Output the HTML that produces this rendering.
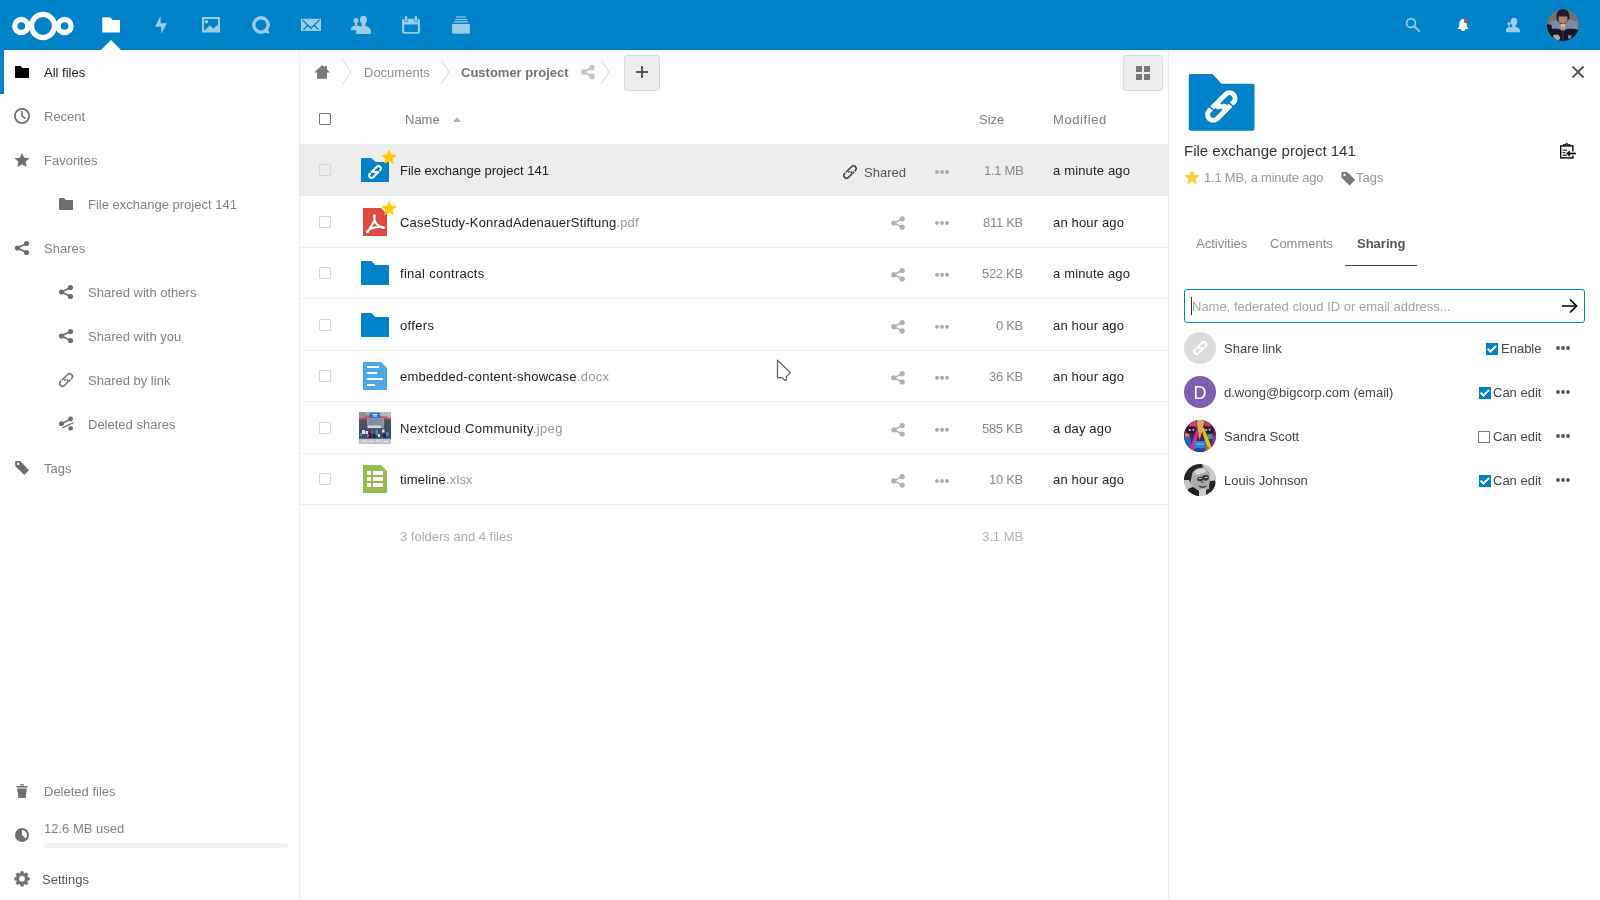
<!DOCTYPE html>
<html><head><meta charset="utf-8">
<style>
*{box-sizing:border-box;margin:0;padding:0}
html,body{width:1600px;height:900px;overflow:hidden;background:#fff;font-family:"Liberation Sans",sans-serif;font-size:13px;color:#222}
.a{position:absolute}
.t{position:absolute;white-space:nowrap;font-size:13px;line-height:16px;will-change:transform}
svg{position:absolute;overflow:visible}
#hdr{position:absolute;left:0;top:0;width:1600px;height:50px;background:#0082c9}
#nav{position:absolute;left:0;top:50px;width:300px;height:850px;background:#fff;border-right:1px solid #eee}
.nv{color:#828282}
.ext{color:#999}
.sz{color:#8a8a8a;letter-spacing:-0.3px}
.line{position:absolute;left:300px;width:868px;height:1px;background:#ededed}
.cb{position:absolute;left:319px;width:12px;height:12px;border:1px solid #d6d6d6;border-radius:1px;background:transparent}
</style></head><body>
<div id="hdr"></div>
<svg width="1600" height="50" style="left:0;top:0">
<g fill="none" stroke="#fff">
<circle cx="43" cy="26" r="11.55" stroke-width="5.3"/>
<circle cx="21.3" cy="26" r="6.5" stroke-width="5.4"/>
<circle cx="64.6" cy="26" r="6.5" stroke-width="5.4"/>
</g>
<path fill="#fff" d="M102.3 17.2h7.7l3 2.8h7v12.5h-17.7z"/>
<path fill="#fff" d="M101 50l10-10l10 10z"/>
<g fill="#99cde9">
<path d="M160.5 16L155 26.8h6.2l0.1 7L167 23.2h-6.3z"/>
<path d="M202 17h18v15.5h-18z M204 19v11.5h14v-11.5z"/>
<circle cx="206.5" cy="21.8" r="1.8"/>
<path d="M204 31l5.8-5.8l3.5 3.3l5.7-4.8v7.3z"/>
<path fill-rule="evenodd" d="M261 16.1a8.9 8.9 0 1 0 0 17.8a8.9 8.9 0 0 0 4.3-1.1l4.4 1l-1.6-4.3a8.9 8.9 0 0 0 1.8-4.6a8.9 8.9 0 0 0-8.9-8.8z M261 19.4a5.5 5.5 0 1 1 0 11a5.5 5.5 0 0 1 0-11z"/>
<path d="M301 18.8h20v12.2h-20z"/>
<ellipse cx="356" cy="20.6" rx="2.5" ry="2.7"/>
<path d="M354.8 22.5h2.4v3h-2.4z"/>
<path d="M351 29.3c0-2.3 2-3.8 5-3.8c1.6 0 2.9 0.4 3.8 1l0 3.8h-8.2c-0.4 0-0.6-0.4-0.6-1z"/>
<ellipse cx="363.5" cy="19.7" rx="3.5" ry="4"/>
<path d="M361.6 22.5h3.8v3.5h-3.8z"/>
<path d="M356 31.5c0-3.3 3.4-5.8 7.5-5.8s7.5 2.5 7.5 5.8v1.2c0 0.8-0.8 1.3-1.6 1.3h-11.8c-0.8 0-1.6-0.5-1.6-1.3z"/>
<path fill-rule="evenodd" d="M404 18.8h14a2 2 0 0 1 2 2v11a2 2 0 0 1-2 2h-14a2 2 0 0 1-2-2v-11a2 2 0 0 1 2-2z M404.2 24.5v7.6h13.6v-7.6z"/>
<rect x="404.9" y="16" width="2.4" height="5.6" rx="1.2" stroke="#0082c9" stroke-width="1.2" paint-order="stroke"/>
<rect x="414.7" y="16" width="2.4" height="5.6" rx="1.2" stroke="#0082c9" stroke-width="1.2" paint-order="stroke"/>
<rect x="452.1" y="23.9" width="17.8" height="9.9" rx="1"/>
<rect x="454" y="21.2" width="14" height="1.4" opacity="0.9"/>
<rect x="455" y="19" width="12" height="1.1" opacity="0.95"/>
<rect x="456" y="16.3" width="10" height="1.4" opacity="0.85"/>
<circle cx="1411" cy="23" r="4.4" fill="none" stroke="#99cde9" stroke-width="1.6"/>
<path d="M1414 26l5.2 5.2" stroke="#99cde9" stroke-width="1.8" stroke-linecap="round"/>
<ellipse cx="1514" cy="21.7" rx="3.3" ry="3.9"/>
<path d="M1512.3 24.5h3.4v3h-3.4z"/>
<circle cx="1509" cy="23.5" r="1.6"/>
<path d="M1508.4 24.5h1.2v3h-1.2z"/>
<path d="M1506 30.2c0-1.6 1-2.6 2.8-2.9l3.2-0.2c0.8-0.3 1.5-0.4 2-0.4c3.5 0 6 1.6 6 4.1v0.9c0 0.4-0.3 0.6-0.7 0.6h-12.6c-0.4 0-0.7-0.2-0.7-0.6z"/>
</g>
<path fill="none" d="M302.5 20l8.5 8.3l8.5-8.3" stroke="#0082c9" stroke-width="1.3"/>
<path d="M303.5 29.5l4.3-4 M318.5 29.5l-4.3-4" stroke="#0082c9" stroke-width="1.3"/>
<path fill="#fff" d="M1463.2 19c-2.8 0.3-3.8 2.6-3.9 5.2l-0.3 2.6l-1.2 1.4v0.8h10.5v-0.8l-1.2-1.4l-0.3-2.6c-0.1-2.6-0.9-4.9-3.6-5.2z M1460.9 28.9h4.4c0 1.3-0.9 2.1-2.2 2.1s-2.2-0.8-2.2-2.1z"/>
<circle cx="1466" cy="20.8" r="2.3" fill="#0082c9"/><circle cx="1466" cy="20.8" r="2" fill="#ee4a1e"/>
<defs><clipPath id="avc"><circle cx="1563" cy="25" r="16"/></clipPath></defs>
<g clip-path="url(#avc)">
<rect x="1547" y="9" width="32" height="32" fill="#76716f"/>
<path d="M1547 26l3-4l6-2l2 3l-1 6l-4 3l-6 1z" fill="#85807d"/>
<path d="M1556.5 17c0-5 2-8 6.5-8s6.5 3 6.5 8l-0.5 7l-2-1v-6h-8v6l-2 1z" fill="#1b1d30"/>
<path d="M1558.6 16.5h8.8v5c-0.8 2.5-2.5 3.3-4.4 3.3s-3.6-0.8-4.4-3.3z" fill="#a98676"/>
<path d="M1559.5 21c1 1.8 2 2.6 3.5 2.6s2.5-0.8 3.5-2.6v2.5l-3.5 1.3l-3.5-1.3z" fill="#6e3f33"/>
<path d="M1551 22c2-1.5 4-2 6-1.5l3.5 4l2.5 5l2.5-5l3-5c3.5 0 7 1 9 3v9h-27z" fill="#7d8aa8"/>
<path d="M1560.5 24h5l-1 6h-3z" fill="#cdb3a8"/>
<path d="M1547 30c3-1 8-1.5 12-1l4 2l4-2c4-0.5 9 0 12 1v11h-32z" fill="#151729"/>
<path d="M1547 24l4.5 1l1 16h-5.5z" fill="#10121e"/>
<path d="M1563 27v14" stroke="#454a60" stroke-width="0.7"/>
<path d="M1553 35l5-0.5l2.5 3l-2 3.5h-4z" fill="#bba294"/>
<path d="M1568 35l3.5 0.5l-0.5 3h-3z" fill="#8f7b72"/>
</g>
</svg>
<div id="nav"></div>
<div class="a" style="left:0;top:50px;width:4px;height:44px;background:#0082c9"></div>
<svg width="300" height="850" style="left:0;top:0">
<path fill="#000" d="M15 66h5.5l2 2h6.5v10h-14z"/>
<g fill="#6e6e6e">
<path fill-rule="evenodd" d="M22 108a8 8 0 1 1 0 16a8 8 0 0 1 0-16z M22 109.8a6.2 6.2 0 1 0 0 12.4a6.2 6.2 0 0 0 0-12.4z"/>
<path d="M21.2 111h1.6v4.6l3.2 2.4l-1 1.2l-3.8-3z"/>
<path d="M22 152.9l2.2 4.8l5.3 0.5l-4 3.5l1.2 5.3l-4.7-2.8l-4.7 2.8l1.2-5.3l-4-3.5l5.3-0.5z"/>
<path d="M59 198h5l2 2h7v10h-14z"/>
</g>
<g id="shr" fill="#6e6e6e">
<circle cx="26.5" cy="243.5" r="2.6"/><circle cx="26.5" cy="252.5" r="2.6"/><circle cx="17.5" cy="248" r="2.6"/>
<path d="M17.5 248L26.5 243.5M17.5 248L26.5 252.5" stroke="#6e6e6e" stroke-width="1.8"/>
</g>
<use href="#shr" x="44" y="44"/>
<use href="#shr" x="44" y="88"/>
<path d="M62.43 383.57L69.57 376.43" stroke="#6e6e6e" stroke-width="7.06" stroke-linecap="round"/><path d="M62.43 383.57L69.57 376.43" stroke="#fff" stroke-width="4.12" stroke-linecap="round"/><circle cx="64.82" cy="379.86" r="0.98" fill="#6e6e6e"/><circle cx="67.18" cy="380.14" r="0.98" fill="#6e6e6e"/><path d="M60.70 379.97L63.09 381.94M71.30 380.03L68.91 378.06" stroke="#fff" stroke-width="1.00"/>
<g fill="#6e6e6e">
<circle cx="70.6" cy="419" r="2.4"/><circle cx="70.6" cy="428.3" r="2.4"/><circle cx="61.5" cy="423.7" r="2.5"/><path d="M61.5 423.7L70.6 419" stroke="#6e6e6e" stroke-width="1.7"/><path d="M62.3 427.8L73.8 422.5" stroke="#fff" stroke-width="3.2"/><path d="M62.3 427.8L73.8 422.5" stroke="#6e6e6e" stroke-width="1.3"/>
<path d="M15.2 461H20.3L29 470.2L24.2 475L15.2 466Z"/>
<rect x="17" y="462.7" width="2.2" height="2.2" fill="#fff"/>
<path d="M16.5 786h11v1.6h-11z M20 784.3h4v1.2h-4z M17.3 788.6h9.4l-1 9.4h-7.4z"/>
<path fill-rule="evenodd" d="M22 828a7 7 0 1 1 0 14a7 7 0 0 1 0-14z M22 830v5l3.6 3.4a5 5 0 0 0-3.6-8.4z"/>
<path fill-rule="evenodd" stroke="#6e6e6e" stroke-width="0.6" stroke-linejoin="round" d="M27.20 877.01L29.41 877.63L29.41 879.97L27.20 880.59L26.94 881.21L28.07 883.21L26.41 884.87L24.41 883.74L23.79 884.00L23.17 886.21L20.83 886.21L20.21 884.00L19.59 883.74L17.59 884.87L15.93 883.21L17.06 881.21L16.80 880.59L14.59 879.97L14.59 877.63L16.80 877.01L17.06 876.39L15.93 874.39L17.59 872.73L19.59 873.86L20.21 873.60L20.83 871.39L23.17 871.39L23.79 873.60L24.41 873.86L26.41 872.73L28.07 874.39L26.94 876.39Z M25.20 878.80A3.2 3.2 0 1 0 18.80 878.80A3.2 3.2 0 1 0 25.20 878.80Z"/>
</g>
</svg>
<div class="t" style="left:44px;top:65px;color:#222">All files</div>
<div class="t nv" style="left:44px;top:109px">Recent</div>
<div class="t nv" style="left:44px;top:153px">Favorites</div>
<div class="t nv" style="left:88px;top:197px">File exchange project 141</div>
<div class="t nv" style="left:44px;top:241px">Shares</div>
<div class="t nv" style="left:88px;top:285px">Shared with others</div>
<div class="t nv" style="left:88px;top:329px">Shared with you</div>
<div class="t nv" style="left:88px;top:373px">Shared by link</div>
<div class="t nv" style="left:88px;top:417px">Deleted shares</div>
<div class="t nv" style="left:44px;top:461px">Tags</div>
<div class="t nv" style="left:44px;top:784px">Deleted files</div>
<div class="t nv" style="left:44px;top:821px">12.6 MB used</div>
<div class="a" style="left:44px;top:843px;width:244px;height:5px;border-radius:3px;background:#f2f2f2"></div>
<div class="t" style="left:42px;top:872px;color:#555">Settings</div>

<!-- main -->
<svg width="1600" height="900" style="left:0;top:0">
<path fill="#7a7a7a" d="M322.2 64.9L314.2 72.6H317.1V78.8H327V72.6H330L327 69.6V66H324.6V67.3z"/>
<g fill="none" stroke="#d4d4d4" stroke-width="1">
<path d="M343 60l8 12l-8 12"/><path d="M441 60l8 12l-8 12"/><path d="M601 60l8 12l-8 12"/>
</g>
<g fill="#c2c2c2">
<circle cx="592" cy="67.6" r="2.8"/><circle cx="592" cy="76.4" r="2.8"/><circle cx="583.8" cy="72" r="2.8"/>
<path d="M583.8 72L592 67.6M583.8 72L592 76.4" stroke="#c2c2c2" stroke-width="2"/>
</g>
</svg>
<div class="t" style="left:364px;top:65px;color:#8f8f8f">Documents</div>
<div class="t" style="left:461px;top:65px;color:#737373;font-weight:bold">Customer project</div>
<div class="a" style="left:624px;top:55px;width:36px;height:36px;background:#ededed;border:1px solid #dbdbdb;border-radius:3px"></div>
<div class="a" style="left:636px;top:71px;width:12px;height:2px;background:#555"></div>
<div class="a" style="left:641px;top:66px;width:2px;height:12px;background:#555"></div>
<div class="a" style="left:1123px;top:55px;width:40px;height:36px;background:#ededed;border:1px solid #dbdbdb;border-radius:3px"></div>
<div class="a" style="left:1136px;top:66px;width:6px;height:6px;background:#777"></div>
<div class="a" style="left:1144px;top:66px;width:6px;height:6px;background:#777"></div>
<div class="a" style="left:1136px;top:74px;width:6px;height:6px;background:#777"></div>
<div class="a" style="left:1144px;top:74px;width:6px;height:6px;background:#777"></div>
<div class="a" style="left:1168px;top:50px;width:1px;height:850px;background:#eee"></div>
<!-- thead -->
<div class="a" style="left:319px;top:113px;width:12px;height:12px;border:1px solid #777;border-radius:1px"></div>
<div class="t" style="left:405px;top:112px;color:#7d7d7d">Name</div>
<svg width="10" height="6" style="left:453px;top:117px"><path d="M0 5l4 -4.5l4 4.5z" fill="#aaa"/></svg>
<div class="t" style="left:979px;top:112px;color:#7d7d7d">Size</div>
<div class="t" style="left:1053px;top:112px;color:#7d7d7d;letter-spacing:0.6px">Modified</div>
<!-- row highlight -->
<div class="a" style="left:300px;top:144px;width:868px;height:52px;background:#ededed"></div>
<div class="line" style="top:247px"></div>
<div class="line" style="top:298px"></div>
<div class="line" style="top:350px"></div>
<div class="line" style="top:401px"></div>
<div class="line" style="top:453px"></div>
<div class="line" style="top:504px"></div>
<div class="cb" style="top:164px"></div>
<div class="cb" style="top:216px"></div>
<div class="cb" style="top:267px"></div>
<div class="cb" style="top:319px"></div>
<div class="cb" style="top:370px"></div>
<div class="cb" style="top:422px"></div>
<div class="cb" style="top:473px"></div>
<svg width="1600" height="900" style="left:0;top:0">
<defs>
<path id="fld" d="M0 0.6a0.6 0.6 0 0 1 0.6-0.6h9.8l4 4h13a0.6 0.6 0 0 1 0.6 0.6v18.8a0.6 0.6 0 0 1-0.6 0.6h-26.8a0.6 0.6 0 0 1-0.6-0.6z"/>
<path id="star" d="M8 0l2.3 4.9l5.5 0.6l-4.1 3.7l1.1 5.4l-4.8-2.8l-4.8 2.8l1.1-5.4l-4.1-3.7l5.5-0.6z"/>
<g id="shi" fill="#b0b0b0">
<circle cx="11.2" cy="2.8" r="2.6"/><circle cx="11.2" cy="11.2" r="2.6"/><circle cx="2.8" cy="7" r="2.6"/>
<path d="M2.8 7L11.2 2.8M2.8 7L11.2 11.2" stroke="#b0b0b0" stroke-width="1.5"/>
</g>
<g id="dots" fill="#aaa"><circle cx="2" cy="2" r="2"/><circle cx="7" cy="2" r="2"/><circle cx="12" cy="2" r="2"/></g>
</defs>
<use href="#fld" x="361" y="158" fill="#0082c9"/>
<path d="M371.54 175.46L378.46 168.54" stroke="#fff" stroke-width="6.84" stroke-linecap="round"/><path d="M371.54 175.46L378.46 168.54" stroke="#0082c9" stroke-width="2.66" stroke-linecap="round"/><circle cx="373.86" cy="171.87" r="1.33" fill="#fff"/><circle cx="376.14" cy="172.13" r="1.33" fill="#fff"/><path d="M369.86 171.97L372.18 173.88M380.14 172.03L377.82 170.12" stroke="#0082c9" stroke-width="1.00"/>
<use href="#star" x="381" y="149.5" fill="#fc0"/>
<path fill="#dc4a40" d="M363 208h18l6 6v22h-24z"/>
<path fill="none" stroke="#fff" stroke-width="2.1" stroke-linecap="round" stroke-linejoin="round" d="M374.3 215.6C373.9 218 374.4 220.5 375.5 222.6C376.9 225.2 379.6 226.9 383.4 227.5C379.8 226.6 374.5 227.1 370.6 228.7C369.2 229.7 367.9 231 367.3 231.8C368.6 229.9 371.7 226.1 373.6 222.5C374.6 220.4 374.8 217.6 374.3 215.6z"/><circle cx="374.3" cy="215.8" r="1.4" fill="#fff"/><circle cx="383.3" cy="227.4" r="1.5" fill="#fff"/><circle cx="367.4" cy="231.6" r="1.6" fill="#fff"/>
<use href="#star" x="381" y="200.8" fill="#fc0"/>
<use href="#fld" x="361" y="261" fill="#0082c9"/>
<use href="#fld" x="361" y="313" fill="#0082c9"/>
<path fill="#4ba9e6" d="M363 362h18l6 6v22h-24z"/>
<g fill="#fff"><rect x="367" y="366" width="12" height="2"/><rect x="367" y="372" width="10" height="2"/><rect x="367" y="378" width="16" height="2"/><rect x="367" y="384" width="8" height="2"/></g>
<path fill="#96bc4f" d="M363 465h18l6 6v22h-24z"/>
<g fill="#fff"><rect x="367" y="471" width="4" height="4"/><rect x="373" y="471" width="10" height="4"/><rect x="367" y="477" width="4" height="4"/><rect x="373" y="477" width="10" height="4"/><rect x="367" y="483" width="4" height="4"/><rect x="373" y="483" width="10" height="4"/></g>
<path d="M846.54 175.46L853.46 168.54" stroke="#444" stroke-width="6.84" stroke-linecap="round"/><path d="M846.54 175.46L853.46 168.54" stroke="#ededed" stroke-width="3.80" stroke-linecap="round"/><circle cx="848.86" cy="171.87" r="0.95" fill="#444"/><circle cx="851.14" cy="172.13" r="0.95" fill="#444"/><path d="M844.86 171.97L847.18 173.88M855.14 172.03L852.82 170.12" stroke="#ededed" stroke-width="1.00"/>
<use href="#dots" x="935" y="170"/>
<use href="#shi" x="891" y="216"/><use href="#dots" x="935" y="221"/>
<use href="#shi" x="891" y="267.7"/><use href="#dots" x="935" y="272.7"/>
<use href="#shi" x="891" y="319.7"/><use href="#dots" x="935" y="324.7"/>
<use href="#shi" x="891" y="370.8"/><use href="#dots" x="935" y="375.8"/>
<use href="#shi" x="891" y="422.8"/><use href="#dots" x="935" y="427.8"/>
<use href="#shi" x="891" y="473.9"/><use href="#dots" x="935" y="478.9"/>
</svg>
<div class="t" style="left:400px;top:163px">File exchange project 141</div>
<div class="t" style="left:400px;top:215px;letter-spacing:0.19px">CaseStudy-KonradAdenauerStiftung<span class="ext">.pdf</span></div>
<div class="t" style="left:400px;top:266px;letter-spacing:0.29px">final contracts</div>
<div class="t" style="left:400px;top:318px;letter-spacing:0.35px">offers</div>
<div class="t" style="left:400px;top:369px;letter-spacing:0.25px">embedded-content-showcase<span class="ext">.docx</span></div>
<div class="t" style="left:400px;top:421px;letter-spacing:0.35px">Nextcloud Community<span class="ext">.jpeg</span></div>
<div class="t" style="left:400px;top:472px;letter-spacing:0.15px">timeline<span class="ext">.xlsx</span></div>
<div class="t" style="left:864px;top:165px;color:#555">Shared</div>
<div class="t sz" style="right:577px;top:163px">1.1 MB</div>
<div class="t sz" style="right:577px;top:215px">811 KB</div>
<div class="t sz" style="right:577px;top:266px">522 KB</div>
<div class="t sz" style="right:577px;top:318px">0 KB</div>
<div class="t sz" style="right:577px;top:369px">36 KB</div>
<div class="t sz" style="right:577px;top:421px">585 KB</div>
<div class="t sz" style="right:577px;top:472px">10 KB</div>
<div class="t" style="left:1053px;top:163px;letter-spacing:0.16px">a minute ago</div>
<div class="t" style="left:1053px;top:215px;letter-spacing:0.16px">an hour ago</div>
<div class="t" style="left:1053px;top:266px;letter-spacing:0.16px">a minute ago</div>
<div class="t" style="left:1053px;top:318px;letter-spacing:0.16px">an hour ago</div>
<div class="t" style="left:1053px;top:369px;letter-spacing:0.16px">an hour ago</div>
<div class="t" style="left:1053px;top:421px;letter-spacing:0.16px">a day ago</div>
<div class="t" style="left:1053px;top:472px;letter-spacing:0.16px">an hour ago</div>
<div class="t" style="left:400px;top:529px;color:#adadad">3 folders and 4 files</div>
<div class="t" style="right:577px;top:529px;color:#b3b3b3">3.1 MB</div>
<!-- thumb -->
<svg width="32" height="32" style="left:359px;top:412px">
<rect width="32" height="32" fill="#5c6476"/>
<rect x="0" y="0" width="32" height="6" fill="#a9adb5"/>
<path d="M0 0h6l2 3l3-1v4h-11z" fill="#8c9099"/>
<path d="M21 0h11v5l-4-2l-3 1z" fill="#b8bcc3"/>
<rect x="10.8" y="0.8" width="10.2" height="5.2" fill="#1f78d1"/>
<path d="M13.5 2.5h5M14 4h4" stroke="#d8e8f8" stroke-width="1"/>
<path d="M0 6.4c3-1.2 7-2.2 10.8-2.4v2c-4 0.2-8 1-10.8 2.2z M21 4c4 0.2 8 1.2 11 2.4v1.8c-3-1.2-7-2-11-2.2z" fill="#cd5068"/>
<rect x="0" y="7.5" width="8" height="9" fill="#4c5262"/>
<rect x="25" y="7.5" width="7" height="9" fill="#475064"/>
<rect x="8" y="6" width="17" height="10.5" fill="#8e96a8"/>
<path d="M9.5 8h14M9.5 10h14M9.5 12h14" stroke="#737c90" stroke-width="0.7"/>
<rect x="9" y="13.6" width="13" height="2.4" fill="#d2d6de"/>
<rect x="0" y="16.4" width="32" height="10.4" fill="#3e4a66"/>
<g fill="#dfe2ea"><rect x="3" y="18" width="3" height="4"/><rect x="6.5" y="19" width="2.5" height="3"/><rect x="23" y="17.5" width="2.5" height="3"/><rect x="19" y="22" width="2" height="3"/></g>
<rect x="12" y="18.5" width="2.5" height="3" fill="#cf3b45"/>
<g fill="#3f8ad6"><rect x="16.5" y="17.5" width="2.5" height="6"/><rect x="27" y="20" width="2.5" height="4"/><rect x="1" y="21" width="2" height="3"/></g>
<g fill="#1d2438"><rect x="9" y="21" width="3" height="5"/><rect x="13.5" y="22" width="3" height="4"/><rect x="24" y="21.5" width="3" height="4"/></g>
<rect x="8" y="22" width="2" height="3" fill="#9b5cb0"/>
<rect x="0" y="26.8" width="32" height="5.2" fill="#c2c3c6"/>
<path d="M3 29h5M10 29.5h4M17 29h5M24 29.5h5" stroke="#eeeeee" stroke-width="1"/>
</svg>
<!-- cursor -->
<svg width="16" height="22" style="left:776px;top:359px"><path d="M1.5 1.2v17.5l4.5-0.1l3 2.8l1.4-0.3v-3.5l3.9-4z" fill="#fff" stroke="#5b6166" stroke-width="1.3" stroke-linejoin="round"/></svg>
<!-- app sidebar -->
<svg width="1600" height="900" style="left:0;top:0">
<path fill="#0082c9" d="M1188.8 76a2 2 0 0 1 2-2h21.7l9 9.8h31a2 2 0 0 1 2 2v43a2 2 0 0 1-2 2h-61.7a2 2 0 0 1-2-2z"/>
<path d="M1213.19 114.71L1229.51 98.39" stroke="#fff" stroke-width="16.13" stroke-linecap="round"/><path d="M1213.19 114.71L1229.51 98.39" stroke="#0082c9" stroke-width="6.27" stroke-linecap="round"/><circle cx="1218.66" cy="106.23" r="3.14" fill="#fff"/><circle cx="1224.04" cy="106.87" r="3.14" fill="#fff"/><path d="M1209.23 106.47L1214.70 110.98M1233.47 106.63L1228.00 102.12" stroke="#0082c9" stroke-width="1.57"/>
<path d="M1572.5 66.5l11 11M1583.5 66.5l-11 11" stroke="#555" stroke-width="1.9"/>
<g fill="none" stroke="#000">
<rect x="1560.7" y="145.9" width="12.2" height="12" stroke-width="1.4"/>
<path d="M1563.6 146v-1.1h1.6l1.6-1.3l1.6 1.3h1.6v1.1" stroke-width="1.2"/>
<path d="M1562.6 150.2h4.5M1562.6 152.7h3M1562.6 155.2h4.5" stroke-width="1"/>
</g>
<path d="M1575.8 153.5h-8.5" stroke="#fff" stroke-width="4"/>
<path d="M1575.8 153.5h-6.5" stroke="#000" stroke-width="1.7"/>
<path d="M1566.2 153.5l3.6-3.3v6.6z" fill="#000"/>
<path fill="#fdd43c" d="M1192.00 169.70L1194.20 174.82L1199.75 175.33L1195.57 179.01L1196.79 184.44L1192.00 181.60L1187.21 184.44L1188.43 179.01L1184.25 175.33L1189.80 174.82Z"/>
<path fill="#777" d="M1341.5 172v5.5l8 8.1l5.7-5.7l-8.1-7.9z"/>
<circle cx="1344.5" cy="175" r="1.2" fill="#fff"/>
<circle cx="1200" cy="348" r="16" fill="#dbdbdb"/>
<path d="M1196.63 351.57L1203.77 344.43" stroke="#fff" stroke-width="7.06" stroke-linecap="round"/><path d="M1196.63 351.57L1203.77 344.43" stroke="#dbdbdb" stroke-width="2.74" stroke-linecap="round"/><circle cx="1199.02" cy="347.86" r="1.37" fill="#fff"/><circle cx="1201.38" cy="348.14" r="1.37" fill="#fff"/><path d="M1194.90 347.97L1197.29 349.94M1205.50 348.03L1203.11 346.06" stroke="#dbdbdb" stroke-width="1.00"/>
<circle cx="1200" cy="392" r="16" fill="#7e5fad"/>
<defs><clipPath id="c1"><circle cx="1200" cy="436" r="16"/></clipPath><clipPath id="c2"><circle cx="1200" cy="480" r="16"/></clipPath></defs>
<g clip-path="url(#c1)">
<rect x="1184" y="420" width="32" height="32" fill="#4a2450"/>
<path d="M1184 420h32v16l-4-1l-3-6l-4-2h-10l-4 2l-3 6l-4 1z" fill="#5b2660"/>
<path d="M1190 420h6l1 6l-3 2l-5-1z" fill="#cf4466"/>
<path d="M1204 420h7l-1 7l-5 1z" fill="#b8405e"/>
<path d="M1196.8 420h7.8l-2.5 11l-2.6 9l-1.8-9z" fill="#e3a462"/>
<path d="M1187 427l7-1l2 4l-2 3.5l-6-0.5l-2-3z" fill="#2a1630"/>
<path d="M1205 426l7 1l2 3l-2 3.5l-6 0.5l-2-3.5z" fill="#2a1630"/>
<circle cx="1189.8" cy="430" r="1.1" fill="#d9d0f0"/><circle cx="1193.4" cy="429.7" r="1" fill="#c8b8e8"/>
<circle cx="1206.2" cy="430" r="1.1" fill="#d9d0f0"/><circle cx="1209.6" cy="429.7" r="1" fill="#c8b8e8"/>
<path d="M1185 433l4 1l1 3l-5 1z" fill="#e08c3a"/>
<path d="M1207.5 434h5v5h-5z" fill="#3f9a7c"/>
<path d="M1212 436l4-1v12l-4 1z" fill="#8b3c8e"/>
<path d="M1184 437l6-1l2 10l-5 3l-3-1z" fill="#2a62c4"/>
<path d="M1201 428.5l3-0.8l8.5 21.5l-3.8 2.5z" fill="#d9c226"/>
<path d="M1196 431l3 1l-5.5 19l-4-1.5z" fill="#e3287a"/>
<path d="M1194 441h12l-0.5 8l-5.5 3l-6-3z" fill="#2d84d6"/>
<path d="M1195 448h10l-1 4h-8z" fill="#1f4cb8"/>
<path d="M1196 444h8" stroke="#8fd0f2" stroke-width="0.9"/>
<path d="M1206 446l3 1l-1 5h-3z" fill="#d4622e"/>
</g>
<g clip-path="url(#c2)">
<rect x="1184" y="464" width="32" height="32" fill="#b4b4b4"/>
<path d="M1203 464h13v18l-5-1l-3-8z" fill="#c9c9c9"/>
<path d="M1184 470c2-4 8-6 18-6l1 4c-5 0-9 2-11 6l-1 6l-1 4l-6-1z" fill="#262626"/>
<path d="M1192 474c2-5 7-7 12-6c4 1 6 4 6 8l-0.5 8c-1 5-4 8-8 8c-5 0-8-3-9-8z" fill="#a9a9a9"/>
<path d="M1194 472c2-3 6-4 9-3.5c2 0.5 3 2 3 3.5l-4 1.5l-6 1.5z" fill="#d5d5d5"/>
<path d="M1197 479c1-2 3-2.5 4.5-2l2-1.5c2-0.8 4-0.3 5.5 1l-0.5 3l-2.5 1.5l-2.5-1l-2 1.5l-3.5-0.5z" fill="#3a3a3a"/>
<path d="M1199 478.5h2.5M1205 477.5h2.5" stroke="#d9d9d9" stroke-width="1.2"/>
<path d="M1199 486c2 1.5 5 1.5 7.5 0" stroke="#3c3c3c" stroke-width="1.3" fill="none"/>
<path d="M1201 482c1 1 2 1 3 0" stroke="#555" stroke-width="1" fill="none"/>
<path d="M1210 481l5-0.5l1 6l-2 7l-4-1l-1-6z" fill="#222"/>
<path d="M1184 480l5 0l3 6l-2 3l-6 0z" fill="#c4c4c4"/>
<path d="M1188 489l5-2l6 4v5h-11z" fill="#1b1b1b"/>
<path d="M1199 490l6-1l5 1v6h-11z" fill="#cdcdcd"/>
<path d="M1206 490l5-2l4 2l-2 6h-7z" fill="#2a2a2a"/>
</g>
<g id="cbk"><rect x="1486" y="343" width="12" height="12" fill="#0082c9"/><path d="M1487.6 348.6l2.9 2.9l5.6-5.6" fill="none" stroke="#fff" stroke-width="2"/></g>
<use href="#cbk" x="-7" y="44"/>
<rect x="1478.5" y="431.5" width="11" height="11" fill="#fff" stroke="#7a7a7a" stroke-width="1"/>
<use href="#cbk" x="-7" y="132"/>
<g fill="#555"><circle cx="1558" cy="348" r="1.9"/><circle cx="1563" cy="348" r="1.9"/><circle cx="1568" cy="348" r="1.9"/>
<circle cx="1558" cy="392" r="1.9"/><circle cx="1563" cy="392" r="1.9"/><circle cx="1568" cy="392" r="1.9"/>
<circle cx="1558" cy="436" r="1.9"/><circle cx="1563" cy="436" r="1.9"/><circle cx="1568" cy="436" r="1.9"/>
<circle cx="1558" cy="480" r="1.9"/><circle cx="1563" cy="480" r="1.9"/><circle cx="1568" cy="480" r="1.9"/></g>
<path d="M1562 306h14M1570 299.5l6.5 6.5l-6.5 6.5" fill="none" stroke="#000" stroke-width="1.7"/>
</svg>
<div class="t" style="left:1184px;top:142px;font-size:15px;line-height:18px;color:#333">File exchange project 141</div>
<div class="t" style="left:1204px;top:170px;color:#999;letter-spacing:-0.22px">1.1 MB, a minute ago</div>
<div class="t" style="left:1356px;top:170px;color:#999">Tags</div>
<div class="t" style="left:1196px;top:236px;color:#8a8a8a">Activities</div>
<div class="t" style="left:1270px;top:236px;color:#8a8a8a">Comments</div>
<div class="t" style="left:1357px;top:236px;color:#555;font-weight:bold">Sharing</div>
<div class="a" style="left:1345px;top:265px;width:72px;height:1px;background:#444"></div>
<div class="a" style="left:1184px;top:289px;width:401px;height:34px;border:1px solid #0082c9;border-radius:3px"></div>
<div class="a" style="left:1191px;top:297px;width:1px;height:18px;background:#333"></div>
<div class="t" style="left:1192px;top:299px;color:#a5a5a5">Name, federated cloud ID or email address...</div>
<div class="t" style="left:1224px;top:341px;color:#444">Share link</div>
<div class="t" style="left:1224px;top:385px;color:#444">d.wong@bigcorp.com (email)</div>
<div class="t" style="left:1224px;top:429px;color:#444">Sandra Scott</div>
<div class="t" style="left:1224px;top:473px;color:#444">Louis Johnson</div>
<div class="t" style="left:1501px;top:341px;color:#444">Enable</div>
<div class="t" style="left:1493px;top:385px;color:#444">Can edit</div>
<div class="t" style="left:1493px;top:429px;color:#444">Can edit</div>
<div class="t" style="left:1493px;top:473px;color:#444">Can edit</div>
<div class="a" style="left:1184px;top:377px;width:32px;height:32px;line-height:32px;text-align:center;color:#fff;font-size:18px;will-change:transform">D</div>
</body></html>
